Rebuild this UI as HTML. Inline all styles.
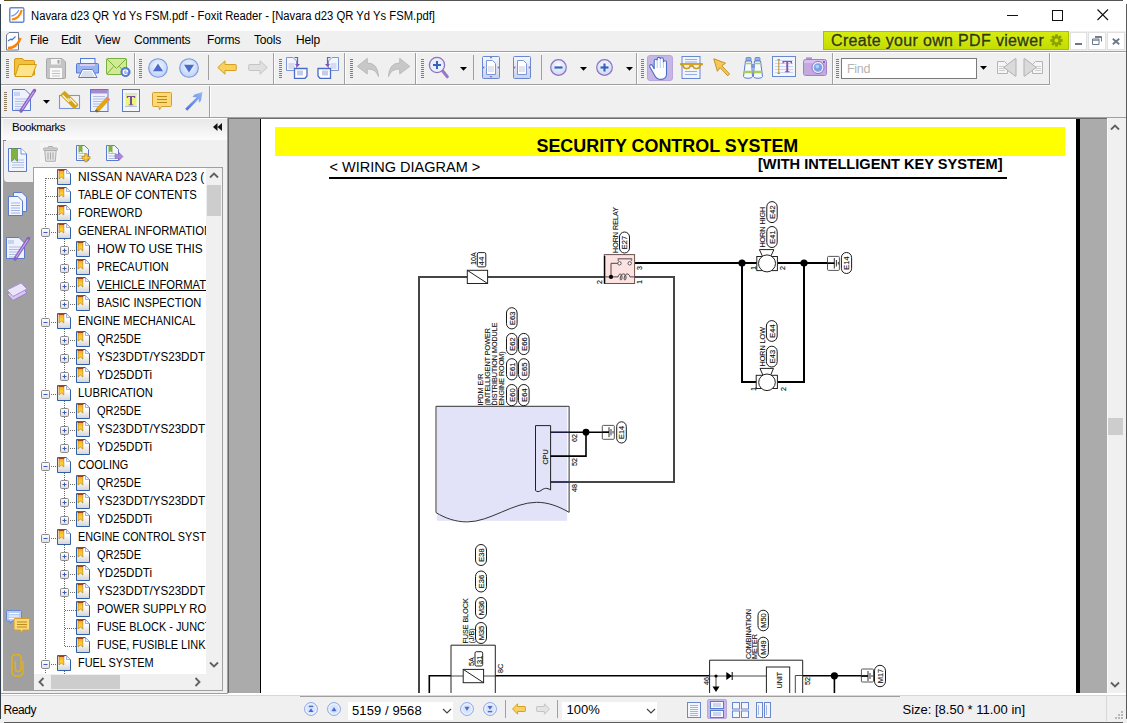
<!DOCTYPE html>
<html><head><meta charset="utf-8">
<style>
*{margin:0;padding:0;box-sizing:border-box}
html,body{width:1127px;height:723px;overflow:hidden;background:#f0f0f0;font-family:"Liberation Sans",sans-serif;color:#000}
.a{position:absolute}
.t{position:absolute;white-space:nowrap;font-size:12px;line-height:14px}
svg{position:absolute;overflow:visible}
.grip{background:repeating-linear-gradient(#8a7c62 0,#8a7c62 1px,transparent 1px,transparent 2px)}
</style></head><body>
<!-- backdrop edges -->
<div class="a" style="left:0;top:0;width:1127px;height:723px;background:#f0f0f0"></div>

<!-- title bar -->
<div class="a" style="left:0;top:0;width:1127px;height:31px;background:#fff"></div>
<div class="a" style="left:4px;top:0;width:1119px;height:1px;background:#555"></div>
<div class="a" style="left:4px;top:0;width:10px;height:1px;background:#5a4c20"></div>
<div class="a" style="left:0;top:4px;width:1px;height:715px;background:#34404c"></div>
<div class="a" style="left:1126px;top:4px;width:1px;height:715px;background:#5a5a5a"></div>
<div class="a" style="left:4px;top:722px;width:1119px;height:1px;background:#5a5a5a"></div>
<div class="t" style="left:31px;top:9px;transform:scaleX(0.938);transform-origin:0 0;color:#000">Navara d23 QR Yd Ys FSM.pdf - Foxit Reader - [Navara d23 QR Yd Ys FSM.pdf]</div>

<!-- menu bar -->
<div class="a" style="left:1px;top:31px;width:1125px;height:20px;background:#f0f0f0"></div>
<div class="a" style="left:1px;top:51px;width:1125px;height:1px;background:#a0a0a0"></div>
<div class="a" style="left:1px;top:52px;width:1125px;height:1px;background:#fff"></div>


<!-- title icon -->
<svg style="left:9px;top:7px" width="16" height="16" viewBox="0 0 17 16" preserveAspectRatio="none">
<rect x="0.8" y="0.8" width="15" height="14.5" rx="1.5" fill="#fff" stroke="#6a88d0" stroke-width="1.6"/>
<path d="M3,12.5 C8,12 12,9 13.5,3" fill="none" stroke="#ff8a00" stroke-width="2.2"/>
<path d="M2.5,9 C4.5,9 8.5,7 10.5,3" fill="none" stroke="#6a9ae0" stroke-width="1.3"/>
</svg>
<!-- window controls -->
<div class="a" style="left:1007px;top:15px;width:11px;height:1px;background:#111"></div>
<div class="a" style="left:1052px;top:10px;width:11px;height:11px;border:1px solid #111"></div>
<svg style="left:1097px;top:9px" width="12" height="12" viewBox="0 0 12 12"><path d="M0.5,0.5 L11,11 M11,0.5 L0.5,11" stroke="#111" stroke-width="1.1"/></svg>

<!-- menu -->
<svg style="left:6px;top:32px" width="16" height="19" viewBox="0 0 16 19">
<path d="M0.5,3 L3,0.5 H12.5 V18 H0.5 Z" fill="#fff" stroke="#707890" stroke-width="1"/>
<path d="M2,16 C7,16 12,13 14.5,6" fill="none" stroke="#ff8000" stroke-width="2.4"/>
<path d="M2,9 L5,7 L6,8 L9.5,4.5" fill="none" stroke="#3a78d8" stroke-width="1.2"/>
</svg>
<div class="t" style="left:30px;top:33px;letter-spacing:-0.2px">File</div>
<div class="t" style="left:61px;top:33px;letter-spacing:-0.2px">Edit</div>
<div class="t" style="left:95px;top:33px;letter-spacing:-0.2px">View</div>
<div class="t" style="left:134px;top:33px;letter-spacing:-0.2px">Comments</div>
<div class="t" style="left:207px;top:33px;letter-spacing:-0.2px">Forms</div>
<div class="t" style="left:254px;top:33px;letter-spacing:-0.2px">Tools</div>
<div class="t" style="left:296px;top:33px;letter-spacing:-0.2px">Help</div>

<!-- banner -->
<div class="a" style="left:823px;top:31px;width:246px;height:19px;background:linear-gradient(#d6ec10,#c4dc00);border:1px solid #a8c000"></div>
<div class="t" style="left:831px;top:31px;font-size:16px;line-height:19px;color:#303a00;letter-spacing:0.33px;-webkit-text-stroke:0.35px #303a00;text-shadow:0 0 2px #eaff70">Create your own PDF viewer</div>
<svg style="left:1049px;top:33px" width="15" height="15" viewBox="0 0 17 17">
<g fill="#8aa000"><circle cx="8.5" cy="8.5" r="5"/>
<rect x="7" y="1.5" width="3" height="14"/><rect x="1.5" y="7" width="14" height="3"/>
<rect x="7" y="1.5" width="3" height="14" transform="rotate(45 8.5 8.5)"/><rect x="7" y="1.5" width="3" height="14" transform="rotate(-45 8.5 8.5)"/></g>
<circle cx="8.5" cy="8.5" r="2.2" fill="#d0e800"/>
</svg>
<!-- MDI controls -->
<div class="a" style="left:1070px;top:32px;width:17px;height:18px;background:#fff;border:1px solid #e0e0e0"></div>
<div class="a" style="left:1075px;top:43px;width:7px;height:2px;background:#6a7888"></div>
<div class="a" style="left:1088px;top:32px;width:18px;height:18px;background:#fff;border:1px solid #e0e0e0"></div>
<svg style="left:1092px;top:36px" width="10" height="9" viewBox="0 0 10 9"><path d="M3,0.5 H9.5 V5.5 M0.5,3 H7 V8.5 H0.5 Z M0.5,4.2 H7 M3,1.6 H9.5" fill="none" stroke="#6a7888" stroke-width="1"/></svg>
<div class="a" style="left:1107px;top:32px;width:18px;height:18px;background:#fff;border:1px solid #e0e0e0"></div>
<svg style="left:1112px;top:38px" width="8" height="7" viewBox="0 0 8 7"><path d="M0.8,0.8 L7.2,6.2 M7.2,0.8 L0.8,6.2" stroke="#6a7888" stroke-width="1.8"/></svg>

<!-- toolbars -->
<div class="a" style="left:1px;top:84px;width:1049px;height:1px;background:#a0a0a0"></div>
<div class="a" style="left:1px;top:85px;width:1049px;height:1px;background:#fff"></div>
<div class="a" style="left:1px;top:117px;width:1125px;height:1px;background:#a0a0a0"></div>

<div class="a grip" style="left:6px;top:59px;width:3px;height:19px"></div>
<svg style="left:14px;top:58px" width="24" height="20" viewBox="0 0 24 20">
<path d="M0.5,2 Q0.5,0.5 2,0.5 H8.5 L10,2.5 H19.5 Q20.5,2.5 20.5,3.5 V17 H0.5 Z" fill="#f2c040" stroke="#d49a10" stroke-width="1"/>
<path d="M5,6.5 H22.5 L18,18.5 H1 Z" fill="#fde48a" stroke="#d49a10" stroke-width="1"/>
</svg>
<svg style="left:46px;top:58px" width="20" height="21" viewBox="0 0 20 21">
<path d="M0.5,1.5 Q0.5,0.5 1.5,0.5 H16 L19.5,4 V19.5 Q19.5,20.5 18.5,20.5 H1.5 Q0.5,20.5 0.5,19.5 Z" fill="#c4c4c4" stroke="#a8a8a8" stroke-width="1"/>
<rect x="5" y="1" width="9.5" height="5.5" fill="#f4f4f4"/><rect x="11.5" y="2" width="2" height="3.5" fill="#a0a0a0"/>
<rect x="4" y="10" width="12" height="10" fill="#fafafa"/>
<path d="M6,13 H14 M6,15.5 H14 M6,18 H14" stroke="#c0c0c0" stroke-width="1"/>
</svg>
<svg style="left:76px;top:58px" width="24" height="20" viewBox="0 0 24 20">
<rect x="4.5" y="0.5" width="14.5" height="7" fill="#f0f8ff" stroke="#5a7ad0" stroke-width="1"/>
<path d="M0.5,6.5 Q0.5,5.5 1.5,5.5 H21.5 Q22.5,5.5 22.5,6.5 V15 H0.5 Z" fill="#98b4f0" stroke="#5a7ad0" stroke-width="1"/>
<rect x="4" y="6" width="15" height="2" fill="#e0c8ec"/>
<path d="M6.5,11.5 H16.5 L21,19.5 H2.5 Z" fill="#fff" stroke="#5a7ad0" stroke-width="1"/>
<path d="M7,14 H16 M6,16 H17 M5,18 H18" stroke="#a8b8e0" stroke-width="0.9"/>
</svg>
<svg style="left:106px;top:58px" width="25" height="20" viewBox="0 0 25 20">
<rect x="0.5" y="0.5" width="20" height="16" rx="1" fill="#d2ea94" stroke="#78b040" stroke-width="1"/>
<path d="M1,1 L10.5,10.5 L20,1 M1,16 L7.5,8.5 M20,16 L13.5,8.5" fill="none" stroke="#78b040" stroke-width="1"/>
<circle cx="19.5" cy="14" r="4.6" fill="#5a82d8" stroke="#4468c0" stroke-width="0.8"/>
<path d="M17.2,14 H21.6 Q21.6,11.8 19.5,11.8 Q17.2,11.8 17.2,14 Q17.2,16.3 19.5,16.3 Q20.8,16.3 21.4,15.6" fill="none" stroke="#fff" stroke-width="1.2"/>
</svg>
<div class="a" style="left:134px;top:53px;width:1px;height:31px;background:#a0a0a0"></div><div class="a" style="left:135px;top:53px;width:1px;height:31px;background:#fff"></div>
<div class="a grip" style="left:139px;top:59px;width:3px;height:19px"></div>
<svg style="left:148px;top:58px" width="20" height="20" viewBox="0 0 20 20">
<defs><radialGradient id="cg148" cx="0.5" cy="0.4" r="0.6"><stop offset="0" stop-color="#f4f8ff"/><stop offset="1" stop-color="#bcd0f6"/></radialGradient></defs>
<circle cx="10" cy="10" r="9.3" fill="url(#cg148)" stroke="#7898e0" stroke-width="1.1"/><path d="M5,13.2 H15 L10,5.5 Z" fill="#4a6cc8"/></svg>
<svg style="left:179px;top:58px" width="20" height="20" viewBox="0 0 20 20">
<defs><radialGradient id="cg179" cx="0.5" cy="0.4" r="0.6"><stop offset="0" stop-color="#f4f8ff"/><stop offset="1" stop-color="#bcd0f6"/></radialGradient></defs>
<circle cx="10" cy="10" r="9.3" fill="url(#cg179)" stroke="#7898e0" stroke-width="1.1"/><path d="M5,6.8 H15 L10,14.5 Z" fill="#4a6cc8"/></svg>
<div class="a" style="left:208px;top:55px;width:1px;height:25px;background:#a0a0a0"></div>
<svg style="left:217px;top:60px" width="20" height="15" viewBox="0 0 20 15">
<path d="M0.8,7.5 L8,0.8 V4.5 H18.5 Q19.3,4.5 19.3,5.3 V9.7 Q19.3,10.5 18.5,10.5 H8 V14.2 Z" fill="#f8d060" stroke="#d8a020" stroke-width="1"/>
</svg>
<svg style="left:248px;top:60px" width="20" height="15" viewBox="0 0 20 15">
<path d="M19.2,7.5 L12,0.8 V4.5 H1.5 Q0.7,4.5 0.7,5.3 V9.7 Q0.7,10.5 1.5,10.5 H12 V14.2 Z" fill="#e0e0e0" stroke="#c4c4c4" stroke-width="1"/>
</svg>
<div class="a" style="left:273px;top:53px;width:1px;height:31px;background:#a0a0a0"></div><div class="a" style="left:274px;top:53px;width:1px;height:31px;background:#fff"></div>
<div class="a grip" style="left:279px;top:59px;width:3px;height:19px"></div>
<svg style="left:286px;top:57px" width="22" height="22" viewBox="0 0 22 22"><g>
<path d="M0.5,0.5 H7 L10.5,4 V13.5 H0.5 Z" fill="#f4f6ff" stroke="#7a96d8" stroke-width="1"/>
<path d="M2.5,7 H8.5 M2.5,9 H8.5 M2.5,11 H8.5" stroke="#a8b4d0" stroke-width="0.8"/>
<path d="M8.5,0.5 H11.5 V8.5" fill="none" stroke="#8a50b8" stroke-width="1.2"/>
<path d="M9,7 H14 L11.5,10 Z" fill="#8a50b8"/>
<path d="M8.5,11.5 H21 V19 L19,21.3 H8.5 Z" fill="#fff" stroke="#4a6cc8" stroke-width="1.3"/>
<path d="M12,13.5 V18.5 M14,13.5 V18.5 M16,13.5 V18.5" stroke="#7a90d0" stroke-width="0.9"/>
</g></svg>
<svg style="left:317px;top:57px" width="22" height="22" viewBox="0 0 22 22"><g transform="translate(22,0) scale(-1,1)">
<path d="M0.5,0.5 H7 L10.5,4 V13.5 H0.5 Z" fill="#f4f6ff" stroke="#7a96d8" stroke-width="1"/>
<path d="M2.5,7 H8.5 M2.5,9 H8.5 M2.5,11 H8.5" stroke="#a8b4d0" stroke-width="0.8"/>
<path d="M8.5,0.5 H11.5 V8.5" fill="none" stroke="#8a50b8" stroke-width="1.2"/>
<path d="M9,7 H14 L11.5,10 Z" fill="#8a50b8"/>
<path d="M8.5,11.5 H21 V19 L19,21.3 H8.5 Z" fill="#fff" stroke="#4a6cc8" stroke-width="1.3"/>
<path d="M12,13.5 V18.5 M14,13.5 V18.5 M16,13.5 V18.5" stroke="#7a90d0" stroke-width="0.9"/>
</g></svg>
<div class="a" style="left:344px;top:53px;width:1px;height:31px;background:#a0a0a0"></div><div class="a" style="left:345px;top:53px;width:1px;height:31px;background:#fff"></div>
<div class="a grip" style="left:350px;top:59px;width:3px;height:19px"></div>
<svg style="left:357px;top:58px" width="22" height="19" viewBox="0 0 22 19">
<path d="M0.3,8.4 L10.3,0.3 V5 Q21,5 21.5,18.6 Q19,10.8 10.3,11 V16 Z" fill="#c8c8c8" stroke="#b4b4b4" stroke-width="0.8"/>
</svg>
<svg style="left:388px;top:58px" width="22" height="19" viewBox="0 0 22 19">
<path d="M21.7,8.4 L11.7,0.3 V5 Q1,5 0.5,18.6 Q3,10.8 11.7,11 V16 Z" fill="#c8c8c8" stroke="#b4b4b4" stroke-width="0.8"/>
</svg>
<div class="a" style="left:415px;top:53px;width:1px;height:31px;background:#a0a0a0"></div><div class="a" style="left:416px;top:53px;width:1px;height:31px;background:#fff"></div>
<div class="a grip" style="left:421px;top:59px;width:3px;height:19px"></div>
<svg style="left:428px;top:56px" width="21" height="23" viewBox="0 0 21 23">
<path d="M13.5,13.5 L19.3,20.8" stroke="#9a78c8" stroke-width="3" stroke-linecap="round"/>
<circle cx="9" cy="9" r="7.6" fill="#e8eefc" stroke="#9070c0" stroke-width="1.3"/>
<path d="M5,9 H13 M9,5 V13" stroke="#3a62b8" stroke-width="2"/>
</svg>
<svg style="left:460px;top:67px" width="7" height="4" viewBox="0 0 7 4"><path d="M0,0 H7 L3.5,3.8 Z" fill="#000"/></svg>
<div class="a" style="left:473px;top:55px;width:1px;height:25px;background:#a0a0a0"></div>
<svg style="left:482px;top:56px" width="18" height="23" viewBox="0 0 18 23">
<defs><linearGradient id="fg482" x1="0" y1="0" x2="0" y2="1"><stop offset="0" stop-color="#f6f8fe"/><stop offset="1" stop-color="#c8d2ec"/></linearGradient></defs>
<rect x="0.5" y="0.5" width="17" height="22" rx="1" fill="url(#fg482)" stroke="#6a88d0" stroke-width="1"/>
<path d="M4.5,4.5 H10.5 L13.5,7.5 V18.5 H4.5 Z" fill="#fff" stroke="#7a96d8" stroke-width="1"/>
<path d="M6,11 H12 M6,13 H12 M6,15 H12" stroke="#b0bcd8" stroke-width="0.8"/>
<path d="M2.2,10 V13 L0.8,11.5 Z M15.8,10 V13 L17.2,11.5 Z" fill="#8a50b8"/><path d="M7.5,2.2 H10.5 L9,0.8 Z M7.5,20.3 H10.5 L9,21.7 Z" fill="#8a50b8"/>
</svg>
<svg style="left:513px;top:56px" width="18" height="23" viewBox="0 0 18 23">
<defs><linearGradient id="fg513" x1="0" y1="0" x2="0" y2="1"><stop offset="0" stop-color="#f6f8fe"/><stop offset="1" stop-color="#c8d2ec"/></linearGradient></defs>
<rect x="0.5" y="0.5" width="17" height="22" rx="1" fill="url(#fg513)" stroke="#6a88d0" stroke-width="1"/>
<path d="M4.5,4.5 H10.5 L13.5,7.5 V18.5 H4.5 Z" fill="#fff" stroke="#7a96d8" stroke-width="1"/>
<path d="M6,11 H12 M6,13 H12 M6,15 H12" stroke="#b0bcd8" stroke-width="0.8"/>
<path d="M2.2,10 V13 L0.8,11.5 Z M15.8,10 V13 L17.2,11.5 Z" fill="#8a50b8"/>
</svg>
<div class="a" style="left:541px;top:55px;width:1px;height:25px;background:#a0a0a0"></div>
<svg style="left:550px;top:59px" width="17" height="17" viewBox="0 0 17 17">
<defs><radialGradient id="zg550" cx="0.5" cy="0.35" r="0.65"><stop offset="0" stop-color="#fafcff"/><stop offset="1" stop-color="#c8d8f8"/></radialGradient></defs>
<circle cx="8.5" cy="8.5" r="7.8" fill="url(#zg550)" stroke="#9070c0" stroke-width="1.2"/><path d="M4.5,8.5 H12.5" stroke="#3a62b8" stroke-width="2.2"/></svg>
<svg style="left:580px;top:67px" width="7" height="4" viewBox="0 0 7 4"><path d="M0,0 H7 L3.5,3.8 Z" fill="#000"/></svg>
<svg style="left:596px;top:59px" width="17" height="17" viewBox="0 0 17 17">
<defs><radialGradient id="zg596" cx="0.5" cy="0.35" r="0.65"><stop offset="0" stop-color="#fafcff"/><stop offset="1" stop-color="#c8d8f8"/></radialGradient></defs>
<circle cx="8.5" cy="8.5" r="7.8" fill="url(#zg596)" stroke="#9070c0" stroke-width="1.2"/><path d="M4.5,8.5 H12.5" stroke="#3a62b8" stroke-width="2.2"/><path d="M8.5,4.5 V12.5" stroke="#3a62b8" stroke-width="2.2"/></svg>
<svg style="left:626px;top:67px" width="7" height="4" viewBox="0 0 7 4"><path d="M0,0 H7 L3.5,3.8 Z" fill="#000"/></svg>
<div class="a" style="left:636px;top:53px;width:1px;height:31px;background:#a0a0a0"></div><div class="a" style="left:637px;top:53px;width:1px;height:31px;background:#fff"></div>
<div class="a grip" style="left:641px;top:59px;width:3px;height:19px"></div>
<div class="a" style="left:647px;top:55px;width:26px;height:26px;background:#c6b6e6;border:1px solid #b8a6dc;border-radius:3px"></div>
<svg style="left:649px;top:57px" width="22" height="23" viewBox="0 0 22 23"><g transform="translate(22,0) scale(-1,1)">
<path d="M4.5,13 V5.5 Q4.5,3.8 6.1,3.8 Q7.6,3.8 7.6,5.5 V2.2 Q7.6,0.7 9.1,0.7 Q10.7,0.7 10.7,2.2 V1.8 Q10.7,0.4 12.2,0.4 Q13.8,0.4 13.8,1.8 V3.6 Q13.8,2.3 15.3,2.3 Q16.8,2.3 16.8,3.8 V12 L18.6,8.6 Q19.5,7.2 20.8,7.9 Q21.7,8.6 21.1,9.9 L16,19 Q14.3,22.4 10,22.4 Q5,22.4 4.5,17.8 Z" fill="#fff" stroke="#4a6cc8" stroke-width="1.1"/>
<path d="M7.6,5 V11 M10.7,2.5 V11 M13.8,3 V11" stroke="#b0c4ec" stroke-width="0.9"/>
</g></svg>
<svg style="left:680px;top:56px" width="23" height="23" viewBox="0 0 23 23">
<rect x="2" y="0.5" width="18" height="22" fill="#f0f4ff" stroke="#6a88d0" stroke-width="1"/>
<path d="M5,3.5 H17 M5,6 H17 M5,15.5 H17 M5,18.5 H17" stroke="#98aee0" stroke-width="1"/>
<path d="M0.5,7.5 H22.5 V9 H20.5 Q20.5,13 16.5,13 Q13,13 12.5,10.5 H10.5 Q10,13 6.5,13 Q2.5,13 2.5,9 H0.5 Z" fill="#d8a420" stroke="#b88410" stroke-width="0.6"/>
<path d="M4,9 Q4,11.7 6.6,11.7 Q9.3,11.7 9.3,9 Z M13.7,9 Q13.7,11.7 16.4,11.7 Q19,11.7 19,9 Z" fill="#f6f2e0"/>
</svg>
<svg style="left:713px;top:58px" width="18" height="19" viewBox="0 0 18 19">
<path d="M0.8,0.8 L12.5,5.2 L8.8,7.8 L16.6,16 L14.8,17.8 L7,9.6 L4.4,13.3 Z" fill="#f4c85a" stroke="#c89020" stroke-width="1"/>
</svg>
<svg style="left:742px;top:57px" width="23" height="22" viewBox="0 0 23 22">
<rect x="4" y="0.5" width="5" height="3.5" rx="1" fill="#98b0e8" stroke="#5a7ad0" stroke-width="0.8"/>
<rect x="13" y="0.5" width="5" height="3.5" rx="1" fill="#98b0e8" stroke="#5a7ad0" stroke-width="0.8"/>
<path d="M3.5,4 H9.5 L10.5,19.5 Q10.5,21.3 6.2,21.3 Q1.5,21.3 1.5,19.5 Z" fill="#f6f8ff" stroke="#5a7ad0" stroke-width="1"/>
<path d="M12.5,4 H18.5 L20.5,19.5 Q20.5,21.3 16,21.3 Q11.5,21.3 11.5,19.5 Z" fill="#f6f8ff" stroke="#5a7ad0" stroke-width="1"/>
<path d="M3.3,6.5 H9.6 M12.4,6.5 H18.8" stroke="#a8d050" stroke-width="1.5"/>
<path d="M2,15 H10.3 M12,15 H20.1" stroke="#a8d050" stroke-width="2.5"/>
<rect x="9.5" y="7" width="3" height="4" fill="#7a96d8"/>
</svg>
<svg style="left:772px;top:56px" width="24" height="21" viewBox="0 0 24 21">
<rect x="0.5" y="0.5" width="23" height="20" fill="#f4f6ff" stroke="#6a88d0" stroke-width="1"/>
<path d="M3,4.5 H21 M3,7.5 H21 M3,10.5 H21 M3,13.5 H21 M3,16.5 H21" stroke="#c4d0ec" stroke-width="0.9"/>
<path d="M6.8,3.5 V17.5 M5.5,3.5 H8 M5.5,17.5 H8" stroke="#c09020" stroke-width="1"/>
<path d="M10.5,5 H20 V7.5 H19.2 Q19,6 17.5,6 H16.2 V15.2 H17.5 V16.3 H13 V15.2 H14.3 V6 H13 Q11.5,6 11.3,7.5 H10.5 Z" fill="#8a50b0"/>
</svg>
<svg style="left:803px;top:57px" width="24" height="19" viewBox="0 0 24 19">
<rect x="3" y="0.3" width="6" height="2.5" fill="#b890d8"/>
<rect x="0.5" y="2.5" width="23" height="16" rx="2" fill="#d8c0ec" stroke="#a080c8" stroke-width="1"/>
<rect x="1" y="6" width="22" height="12" fill="#c4a8e0"/>
<circle cx="15" cy="10.5" r="6" fill="#f0f4ff" stroke="#9070c0" stroke-width="1"/>
<circle cx="15" cy="10.5" r="4.3" fill="#7aa0e8"/>
<circle cx="14.3" cy="9.6" r="1.8" fill="#b8d0f8"/>
<circle cx="21" cy="5" r="1" fill="#6a4a98"/>
</svg>
<div class="a" style="left:832px;top:53px;width:1px;height:31px;background:#a0a0a0"></div><div class="a" style="left:833px;top:53px;width:1px;height:31px;background:#fff"></div>
<div class="a grip" style="left:836px;top:59px;width:3px;height:19px"></div>
<div class="a" style="left:841px;top:58px;width:136px;height:21px;background:#fff;border:1px solid #7a7a7a"></div>
<div class="t" style="left:847px;top:62px;color:#b4b4b4;font-size:12.5px;letter-spacing:-0.3px">Find</div>
<svg style="left:980px;top:66px" width="7" height="4" viewBox="0 0 7 4"><path d="M0,0 H7 L3.5,3.8 Z" fill="#000"/></svg>
<svg style="left:997px;top:58px" width="20" height="19" viewBox="0 0 20 19">
<path d="M0.5,3.5 H7.5 L10.5,6.5 V15.5 H0.5 Z" fill="#f6f6f6" stroke="#b4b4b4" stroke-width="1"/>
<path d="M2,8.5 H8 M2,10.5 H8 M2,12.5 H8" stroke="#c4c4c4" stroke-width="0.8"/>
<path d="M19,0.8 V18 Q19,18.5 18.4,18.2 L7.2,9.8 Q6.6,9.4 7.2,9 L18.4,0.6 Q19,0.3 19,0.8 Z" fill="#dadada" stroke="#b0b0b0" stroke-width="1"/>
</svg>
<svg style="left:1023px;top:58px" width="20" height="19" viewBox="0 0 20 19"><g transform="translate(20,0) scale(-1,1)">
<path d="M0.5,3.5 H7.5 L10.5,6.5 V15.5 H0.5 Z" fill="#f6f6f6" stroke="#b4b4b4" stroke-width="1"/>
<path d="M2,8.5 H8 M2,10.5 H8 M2,12.5 H8" stroke="#c4c4c4" stroke-width="0.8"/>
<path d="M19,0.8 V18 Q19,18.5 18.4,18.2 L7.2,9.8 Q6.6,9.4 7.2,9 L18.4,0.6 Q19,0.3 19,0.8 Z" fill="#dadada" stroke="#b0b0b0" stroke-width="1"/>
</g></svg>
<div class="a" style="left:1049px;top:53px;width:1px;height:31px;background:#a0a0a0"></div><div class="a" style="left:1050px;top:53px;width:1px;height:31px;background:#fff"></div>
<div class="a grip" style="left:4px;top:92px;width:3px;height:19px"></div>
<svg style="left:12px;top:89px" width="24" height="23" viewBox="0 0 24 23">
<path d="M0.5,0.5 H13 L18.5,6 V21.5 H0.5 Z" fill="#eef2fe" stroke="#5a7ad0" stroke-width="1"/>
<path d="M3,3 V7 M5,3 V7 M7,3 V7" stroke="#b0c0e8" stroke-width="1.2"/>
<path d="M3,10 H15 M3,12.5 H15 M3,15 H13 M3,17.5 H11 M3,20 H9" stroke="#a8b8e0" stroke-width="0.9"/>
<path d="M22.5,1.5 L9,22" stroke="#8a60c0" stroke-width="3.4" stroke-linecap="round"/>
<path d="M22,2.5 L10,20.5" stroke="#c8a8f0" stroke-width="1.2"/>
</svg>
<svg style="left:43px;top:100px" width="7" height="4" viewBox="0 0 7 4"><path d="M0,0 H7 L3.5,3.8 Z" fill="#000"/></svg>
<svg style="left:58px;top:89px" width="23" height="22" viewBox="0 0 23 22">
<rect x="1.5" y="6.5" width="20" height="13" fill="#f2f2f2" stroke="#7a96d8" stroke-width="1.1"/>
<g transform="rotate(-45 11.5 11)">
<rect x="8.3" y="1" width="6.4" height="20" rx="1.2" fill="#d4a418"/>
<path d="M10,2.8 V12 M13,10 V19.2" stroke="#fff" stroke-width="1.1"/>
<rect x="10.9" y="8.5" width="1.2" height="4" fill="#f6e8b8"/>
</g>
</svg>
<svg style="left:90px;top:89px" width="20" height="24" viewBox="0 0 20 24">
<rect x="0.5" y="0.5" width="17.5" height="22" fill="#eef2fe" stroke="#5a7ad0" stroke-width="1"/>
<rect x="1" y="1" width="16.5" height="3.5" fill="#a888d0"/>
<path d="M3,7.5 H15 M3,10 H15 M3,12.5 H15 M3,15 H12 M3,17.5 H10" stroke="#a8b8e0" stroke-width="0.9"/>
<path d="M18.5,9 L7.5,21" stroke="#e0a810" stroke-width="4.2"/>
<path d="M18.5,9 L17,10.6" stroke="#f08080" stroke-width="4.2"/>
<path d="M7.5,21 L6,22.6" stroke="#806040" stroke-width="3"/>
</svg>
<svg style="left:122px;top:89px" width="18" height="23" viewBox="0 0 18 23">
<rect x="0.5" y="0.5" width="17" height="22" fill="#f4f6fe" stroke="#5a7ad0" stroke-width="1"/>
<path d="M3,5 H15 M3,17.5 H15" stroke="#b0c0e8" stroke-width="0.9"/>
<rect x="3.5" y="5.5" width="11" height="11.5" fill="#e8f870"/>
<path d="M4.8,7 H13.2 V9 H12.4 Q12.2,8 11.2,8 H10 V15.5 H11.3 V16.3 H6.7 V15.5 H8 V8 H6.8 Q5.8,8 5.6,9 H4.8 Z" fill="#7a4aa0"/>
</svg>
<svg style="left:152px;top:92px" width="21" height="19" viewBox="0 0 21 19">
<path d="M1.5,0.5 H18.5 Q19.5,0.5 19.5,1.5 V13.5 Q19.5,14.5 18.5,14.5 H9.5 L7.5,17.8 L6.8,14.5 H1.5 Q0.5,14.5 0.5,13.5 V1.5 Q0.5,0.5 1.5,0.5 Z" fill="#fcd878" stroke="#d0a030" stroke-width="1"/>
<path d="M5,4.5 H15 M5,7.5 H15 M5,10.5 H15" stroke="#b88a18" stroke-width="1.2"/>
</svg>
<svg style="left:184px;top:91px" width="20" height="21" viewBox="0 0 20 21">
<defs><linearGradient id="arg" x1="0" y1="1" x2="1" y2="0"><stop offset="0" stop-color="#4a72d8"/><stop offset="1" stop-color="#98b8f8"/></linearGradient></defs>
<path d="M1.2,17.8 L12.8,6.2 L8.5,6 L10.5,3.5 L18.5,1 L17,9.8 L14.8,11.8 L15,7.8 L3.2,19.8 Z" fill="url(#arg)"/>
</svg>
<div class="a" style="left:209px;top:86px;width:1px;height:31px;background:#a0a0a0"></div><div class="a" style="left:210px;top:86px;width:1px;height:31px;background:#fff"></div>
<!-- left panel -->
<div class="a" style="left:1px;top:118px;width:227px;height:575px;background:#f0f0f0"></div>

<div class="a" style="left:1px;top:118px;width:226px;height:22px;background:linear-gradient(#fff 0,#fff 1px,#e8e8e8 1px,#fbfbfb 21px)"></div>
<div class="t" style="left:12px;top:120px;font-size:11.5px;letter-spacing:-0.5px">Bookmarks</div>
<svg style="left:213px;top:123px" width="10" height="8" viewBox="0 0 10 8"><path d="M0,4 L4.5,0 V8 Z M4.5,4 L9,0 V8 Z" fill="#111"/></svg>
<div class="a" style="left:227px;top:118px;width:1px;height:576px;background:#a0a0a0"></div>
<div class="a" style="left:1px;top:693px;width:227px;height:1px;background:#a0a0a0"></div>
<div class="a" style="left:3px;top:140px;width:31px;height:551px;background:#a0a0a0"></div>
<div class="a" style="left:3px;top:140px;width:31px;height:42px;background:#f0f0f0;border-left:1px solid #a0a0a0;border-bottom-left-radius:4px"></div><div class="a" style="left:3px;top:140px;width:3px;height:1px;background:#808080"></div>
<div class="a" style="left:2px;top:118px;width:1px;height:575px;background:#fafafa"></div>
<svg style="left:8px;top:148px" width="20" height="25" viewBox="0 0 20 25">
<path d="M0.5,0.5 H13 L18.5,6 V23.5 H0.5 Z" fill="#f0f4fe" stroke="#5a7ad0" stroke-width="1"/>
<path d="M13,0.5 V6 H18.5" fill="#fff" stroke="#5a7ad0" stroke-width="0.8"/>
<path d="M4,12 H16 M4,14.5 H16 M4,17 H16 M4,19.5 H16" stroke="#a8b8e0" stroke-width="0.9"/>
<path d="M3.5,0.5 H9.5 V13.5 L6.5,10.5 L3.5,13.5 Z" fill="#80b040" stroke="#5a8a28" stroke-width="0.6"/>
</svg>
<svg style="left:8px;top:192px" width="20" height="25" viewBox="0 0 20 25">
<path d="M5.5,0.5 H14 L18.5,5 V19.5 H5.5 Z" fill="#eef2fe" stroke="#5a7ad0" stroke-width="1"/>
<path d="M0.5,4.5 H10 L14.5,9 V23.5 H0.5 Z" fill="#f4f6fe" stroke="#5a7ad0" stroke-width="1"/>
<path d="M3,11 H12 M3,13.5 H12 M3,16 H12 M3,18.5 H12 M3,21 H12" stroke="#98aee0" stroke-width="0.9"/>
</svg>
<svg style="left:6px;top:237px" width="24" height="23" viewBox="0 0 24 23">
<path d="M0.5,0.5 H13 L18.5,6 V21.5 H0.5 Z" fill="#eef2fe" stroke="#5a7ad0" stroke-width="1"/>
<path d="M3,3 V7 M5,3 V7 M7,3 V7" stroke="#b0c0e8" stroke-width="1.2"/>
<path d="M3,10 H15 M3,12.5 H15 M3,15 H13 M3,17.5 H11 M3,20 H9" stroke="#a8b8e0" stroke-width="0.9"/>
<path d="M22.5,1.5 L9,22" stroke="#8a60c0" stroke-width="3.4" stroke-linecap="round"/>
<path d="M22,2.5 L10,20.5" stroke="#c8a8f0" stroke-width="1.2"/>
</svg>
<svg style="left:6px;top:281px" width="22" height="22" viewBox="0 0 22 22">
<path d="M1,13 L15,6 L21,12 L7,19.5 Z" fill="#d8c8f0" stroke="#9a80c8" stroke-width="1"/>
<path d="M1,9 L15,2 L21,8 L7,15.5 Z" fill="#ece4fa" stroke="#a890d0" stroke-width="1"/>
</svg>
<svg style="left:6px;top:610px" width="24" height="24" viewBox="0 0 24 24">
<path d="M1,0.5 H14.5 Q15.5,0.5 15.5,1.5 V10 Q15.5,11 14.5,11 H6 L4.5,13.5 L4,11 H1 Q0.5,11 0.5,10 V1.5 Q0.5,0.5 1,0.5 Z" fill="#b8ccf4" stroke="#6a88d0" stroke-width="1"/>
<path d="M3,3.5 H13 M3,6 H13 M3,8.5 H10" stroke="#fff" stroke-width="1"/>
<path d="M9,8.5 H22.5 Q23.5,8.5 23.5,9.5 V19 Q23.5,20 22.5,20 H17 L15.5,23 L14.5,20 H9 Q8,20 8,19 V9.5 Q8,8.5 9,8.5 Z" fill="#fcd878" stroke="#d0a030" stroke-width="1"/>
<path d="M11,12 H21 M11,14.5 H21 M11,17 H21" stroke="#b88a18" stroke-width="1"/>
</svg>
<svg style="left:11px;top:653px" width="14" height="25" viewBox="0 0 14 25">
<path d="M12,8 V19 Q12,23.3 6.5,23.3 Q1,23.3 1,19 V5 Q1,1.5 5.5,1.5 Q10,1.5 10,5 V16 Q10,18.5 6.8,18.5 Q4.3,18.5 4.3,16 V8" fill="none" stroke="#e0b020" stroke-width="1.5"/>
</svg>
<div class="a" style="left:40px;top:143px;width:20px;height:20px;background:#f4f4f4"></div>
<svg style="left:43px;top:146px" width="15" height="16" viewBox="0 0 15 16">
<path d="M5,1.5 Q5,0.5 6,0.5 H9 Q10,0.5 10,1.5" fill="none" stroke="#a8a8a8" stroke-width="1"/>
<rect x="0.5" y="2" width="14" height="2.5" rx="1" fill="#d0d0d0" stroke="#a8a8a8" stroke-width="0.9"/>
<path d="M1.8,4.5 H13.2 L12.3,15.3 H2.7 Z" fill="#e4e4e4" stroke="#a8a8a8" stroke-width="0.9"/>
<path d="M5,6.5 V13.5 M7.5,6.5 V13.5 M10,6.5 V13.5" stroke="#a8a8a8" stroke-width="1"/>
</svg>
<svg style="left:76px;top:145px" width="18" height="17" viewBox="0 0 18 17">
<path d="M0.5,0.5 H8.5 L12.5,4.5 V15.5 H0.5 Z" fill="#f4f6fe" stroke="#5a7ad0" stroke-width="1"/>
<path d="M2.5,8.5 H10.5 M2.5,11 H10.5 M2.5,13.5 H10.5" stroke="#a8b8e0" stroke-width="0.9"/>
<path d="M2.5,0.5 H6.5 V8 L4.5,6.3 L2.5,8 Z" fill="#80b040"/><path d="M8.8,8.8 H11.2 V11.6 H14 V14 H11.2 V16.8 H8.8 V14 H6 V11.6 H8.8 Z" fill="#f8d040" stroke="#c08a10" stroke-width="0.8"/></svg>
<svg style="left:106px;top:145px" width="18" height="17" viewBox="0 0 18 17">
<path d="M0.5,0.5 H8.5 L12.5,4.5 V15.5 H0.5 Z" fill="#f4f6fe" stroke="#5a7ad0" stroke-width="1"/>
<path d="M2.5,8.5 H10.5 M2.5,11 H10.5 M2.5,13.5 H10.5" stroke="#a8b8e0" stroke-width="0.9"/>
<path d="M2.5,0.5 H6.5 V8 L4.5,6.3 L2.5,8 Z" fill="#80b040"/><path d="M9,9.5 H13 V7.5 L17,11.5 L13,15.5 V13.5 H9 Z" fill="#a888d8" stroke="#8a68c0" stroke-width="0.6"/></svg>
<div class="a" style="left:33px;top:167px;width:190px;height:524px;background:#fff;border-left:1px solid #a0a0a0;border-top:1px solid #a0a0a0;border-right:1px solid #a0a0a0;border-bottom:1px solid #a0a0a0"></div>
<div class="a" style="left:206px;top:168px;width:16px;height:506px;background:#f0f0f0"></div>
<div class="a" style="left:207px;top:185px;width:14px;height:31px;background:#cdcdcd"></div>
<svg style="left:209px;top:172px" width="10" height="7" viewBox="0 0 10 7"><path d="M1,5.5 L5,1.5 L9,5.5" fill="none" stroke="#606060" stroke-width="1.8"/></svg>
<svg style="left:209px;top:661px" width="10" height="7" viewBox="0 0 10 7"><path d="M1,1.5 L5,5.5 L9,1.5" fill="none" stroke="#606060" stroke-width="1.8"/></svg>
<div class="a" style="left:34px;top:674px;width:188px;height:16px;background:#f0f0f0"></div>
<div class="a" style="left:51px;top:675px;width:69px;height:14px;background:#cdcdcd"></div>
<svg style="left:38px;top:677px" width="7" height="10" viewBox="0 0 7 10"><path d="M5.5,1 L1.5,5 L5.5,9" fill="none" stroke="#606060" stroke-width="1.8"/></svg>
<svg style="left:194px;top:677px" width="7" height="10" viewBox="0 0 7 10"><path d="M1.5,1 L5.5,5 L1.5,9" fill="none" stroke="#606060" stroke-width="1.8"/></svg>
<div class="a" style="left:34px;top:168px;width:172px;height:506px;overflow:hidden">
<svg style="left:-34px;top:-168px" width="240" height="700" viewBox="0 0 240 700">
<defs><linearGradient id="pg" x1="0" y1="0" x2="0" y2="1"><stop offset="0.35" stop-color="#fff"/><stop offset="1" stop-color="#d4d4d4"/></linearGradient><linearGradient id="rg" x1="0" y1="0" x2="0" y2="1"><stop offset="0" stop-color="#f0a020"/><stop offset="0.6" stop-color="#ffd030"/></linearGradient><linearGradient id="bg" x1="0" y1="0" x2="0" y2="1"><stop offset="0" stop-color="#fff"/><stop offset="1" stop-color="#e0e0e0"/></linearGradient><g id="bk"><path d="M0.5,0.5 H9.5 L13.5,4.5 V15.5 H0.5 Z" fill="url(#pg)" stroke="#2f5fa8" stroke-width="1"/><path d="M9.5,0.5 V4.5 H13.5" fill="#f0f4ff" stroke="#7a9ad0" stroke-width="0.7"/><path d="M2,0.8 H6.8 V10 L4.4,8 L2,10 Z" fill="url(#rg)" stroke="#b07010" stroke-width="0.6"/><rect x="1.5" y="0.6" width="5.8" height="1.2" fill="#8a3010"/></g><g id="mn"><rect x="0.5" y="0.5" width="8" height="8" rx="1.2" fill="url(#bg)" stroke="#8a8a8a" stroke-width="1"/><path d="M2.5,4.5 H6.5" stroke="#3a5ab8" stroke-width="1"/></g><g id="pl"><rect x="0.5" y="0.5" width="8" height="8" rx="1.2" fill="url(#bg)" stroke="#8a8a8a" stroke-width="1"/><path d="M2.5,4.5 H6.5 M4.5,2.5 V6.5" stroke="#3a5ab8" stroke-width="1"/></g></defs>
<line x1="45.5" y1="178" x2="45.5" y2="700" stroke="#6a6a6a" stroke-width="1" stroke-dasharray="1 1"/>
<line x1="64.5" y1="239" x2="64.5" y2="304" stroke="#6a6a6a" stroke-width="1" stroke-dasharray="1 1"/>
<line x1="64.5" y1="329" x2="64.5" y2="376" stroke="#6a6a6a" stroke-width="1" stroke-dasharray="1 1"/>
<line x1="64.5" y1="401" x2="64.5" y2="448" stroke="#6a6a6a" stroke-width="1" stroke-dasharray="1 1"/>
<line x1="64.5" y1="473" x2="64.5" y2="520" stroke="#6a6a6a" stroke-width="1" stroke-dasharray="1 1"/>
<line x1="64.5" y1="545" x2="64.5" y2="646" stroke="#6a6a6a" stroke-width="1" stroke-dasharray="1 1"/>
<line x1="64.5" y1="671" x2="64.5" y2="700" stroke="#6a6a6a" stroke-width="1" stroke-dasharray="1 1"/>
<line x1="46" y1="178.5" x2="57" y2="178.5" stroke="#6a6a6a" stroke-width="1" stroke-dasharray="1 1"/>
<use href="#bk" x="57" y="169"/>
<line x1="46" y1="196.5" x2="57" y2="196.5" stroke="#6a6a6a" stroke-width="1" stroke-dasharray="1 1"/>
<use href="#bk" x="57" y="187"/>
<line x1="46" y1="214.5" x2="57" y2="214.5" stroke="#6a6a6a" stroke-width="1" stroke-dasharray="1 1"/>
<use href="#bk" x="57" y="205"/>
<line x1="51" y1="232.5" x2="57" y2="232.5" stroke="#6a6a6a" stroke-width="1" stroke-dasharray="1 1"/>
<use href="#mn" x="41" y="228"/>
<use href="#bk" x="57" y="223"/>
<line x1="70" y1="250.5" x2="76" y2="250.5" stroke="#6a6a6a" stroke-width="1" stroke-dasharray="1 1"/>
<use href="#pl" x="60" y="246"/>
<use href="#bk" x="76" y="241"/>
<line x1="70" y1="268.5" x2="76" y2="268.5" stroke="#6a6a6a" stroke-width="1" stroke-dasharray="1 1"/>
<use href="#pl" x="60" y="264"/>
<use href="#bk" x="76" y="259"/>
<line x1="70" y1="286.5" x2="76" y2="286.5" stroke="#6a6a6a" stroke-width="1" stroke-dasharray="1 1"/>
<use href="#pl" x="60" y="282"/>
<use href="#bk" x="76" y="277"/>
<line x1="70" y1="304.5" x2="76" y2="304.5" stroke="#6a6a6a" stroke-width="1" stroke-dasharray="1 1"/>
<use href="#pl" x="60" y="300"/>
<use href="#bk" x="76" y="295"/>
<line x1="51" y1="322.5" x2="57" y2="322.5" stroke="#6a6a6a" stroke-width="1" stroke-dasharray="1 1"/>
<use href="#mn" x="41" y="318"/>
<use href="#bk" x="57" y="313"/>
<line x1="70" y1="340.5" x2="76" y2="340.5" stroke="#6a6a6a" stroke-width="1" stroke-dasharray="1 1"/>
<use href="#pl" x="60" y="336"/>
<use href="#bk" x="76" y="331"/>
<line x1="70" y1="358.5" x2="76" y2="358.5" stroke="#6a6a6a" stroke-width="1" stroke-dasharray="1 1"/>
<use href="#pl" x="60" y="354"/>
<use href="#bk" x="76" y="349"/>
<line x1="70" y1="376.5" x2="76" y2="376.5" stroke="#6a6a6a" stroke-width="1" stroke-dasharray="1 1"/>
<use href="#pl" x="60" y="372"/>
<use href="#bk" x="76" y="367"/>
<line x1="51" y1="394.5" x2="57" y2="394.5" stroke="#6a6a6a" stroke-width="1" stroke-dasharray="1 1"/>
<use href="#mn" x="41" y="390"/>
<use href="#bk" x="57" y="385"/>
<line x1="70" y1="412.5" x2="76" y2="412.5" stroke="#6a6a6a" stroke-width="1" stroke-dasharray="1 1"/>
<use href="#pl" x="60" y="408"/>
<use href="#bk" x="76" y="403"/>
<line x1="70" y1="430.5" x2="76" y2="430.5" stroke="#6a6a6a" stroke-width="1" stroke-dasharray="1 1"/>
<use href="#pl" x="60" y="426"/>
<use href="#bk" x="76" y="421"/>
<line x1="70" y1="448.5" x2="76" y2="448.5" stroke="#6a6a6a" stroke-width="1" stroke-dasharray="1 1"/>
<use href="#pl" x="60" y="444"/>
<use href="#bk" x="76" y="439"/>
<line x1="51" y1="466.5" x2="57" y2="466.5" stroke="#6a6a6a" stroke-width="1" stroke-dasharray="1 1"/>
<use href="#mn" x="41" y="462"/>
<use href="#bk" x="57" y="457"/>
<line x1="70" y1="484.5" x2="76" y2="484.5" stroke="#6a6a6a" stroke-width="1" stroke-dasharray="1 1"/>
<use href="#pl" x="60" y="480"/>
<use href="#bk" x="76" y="475"/>
<line x1="70" y1="502.5" x2="76" y2="502.5" stroke="#6a6a6a" stroke-width="1" stroke-dasharray="1 1"/>
<use href="#pl" x="60" y="498"/>
<use href="#bk" x="76" y="493"/>
<line x1="70" y1="520.5" x2="76" y2="520.5" stroke="#6a6a6a" stroke-width="1" stroke-dasharray="1 1"/>
<use href="#pl" x="60" y="516"/>
<use href="#bk" x="76" y="511"/>
<line x1="51" y1="538.5" x2="57" y2="538.5" stroke="#6a6a6a" stroke-width="1" stroke-dasharray="1 1"/>
<use href="#mn" x="41" y="534"/>
<use href="#bk" x="57" y="529"/>
<line x1="70" y1="556.5" x2="76" y2="556.5" stroke="#6a6a6a" stroke-width="1" stroke-dasharray="1 1"/>
<use href="#pl" x="60" y="552"/>
<use href="#bk" x="76" y="547"/>
<line x1="70" y1="574.5" x2="76" y2="574.5" stroke="#6a6a6a" stroke-width="1" stroke-dasharray="1 1"/>
<use href="#pl" x="60" y="570"/>
<use href="#bk" x="76" y="565"/>
<line x1="70" y1="592.5" x2="76" y2="592.5" stroke="#6a6a6a" stroke-width="1" stroke-dasharray="1 1"/>
<use href="#pl" x="60" y="588"/>
<use href="#bk" x="76" y="583"/>
<line x1="65" y1="610.5" x2="76" y2="610.5" stroke="#6a6a6a" stroke-width="1" stroke-dasharray="1 1"/>
<use href="#bk" x="76" y="601"/>
<line x1="65" y1="628.5" x2="76" y2="628.5" stroke="#6a6a6a" stroke-width="1" stroke-dasharray="1 1"/>
<use href="#bk" x="76" y="619"/>
<line x1="65" y1="646.5" x2="76" y2="646.5" stroke="#6a6a6a" stroke-width="1" stroke-dasharray="1 1"/>
<use href="#bk" x="76" y="637"/>
<line x1="51" y1="664.5" x2="57" y2="664.5" stroke="#6a6a6a" stroke-width="1" stroke-dasharray="1 1"/>
<use href="#mn" x="41" y="660"/>
<use href="#bk" x="57" y="655"/>
</svg>
<div class="t" style="left:43.5px;top:2px;transform:scaleX(0.99);transform-origin:0 0;">NISSAN NAVARA D23 (</div>
<div class="t" style="left:43.5px;top:20px;transform:scaleX(0.94);transform-origin:0 0;">TABLE OF CONTENTS</div>
<div class="t" style="left:43.5px;top:38px;transform:scaleX(0.9);transform-origin:0 0;">FOREWORD</div>
<div class="t" style="left:43.5px;top:56px;transform:scaleX(0.935);transform-origin:0 0;">GENERAL INFORMATION</div>
<div class="t" style="left:62.5px;top:74px;transform:scaleX(0.985);transform-origin:0 0;">HOW TO USE THIS</div>
<div class="t" style="left:62.5px;top:92px;transform:scaleX(0.911);transform-origin:0 0;">PRECAUTION</div>
<div class="t" style="left:62.5px;top:110px;transform:scaleX(0.936);transform-origin:0 0;">VEHICLE INFORMATION</div>
<div class="a" style="left:62.5px;top:122px;width:110px;height:1px;background:#000"></div>
<div class="t" style="left:62.5px;top:128px;transform:scaleX(0.926);transform-origin:0 0;">BASIC INSPECTION</div>
<div class="t" style="left:43.5px;top:146px;transform:scaleX(0.917);transform-origin:0 0;">ENGINE MECHANICAL</div>
<div class="t" style="left:62.5px;top:164px;transform:scaleX(0.92);transform-origin:0 0;">QR25DE</div>
<div class="t" style="left:62.5px;top:182px;transform:scaleX(0.97);transform-origin:0 0;">YS23DDT/YS23DDT</div>
<div class="t" style="left:62.5px;top:200px;transform:scaleX(0.968);transform-origin:0 0;">YD25DDTi</div>
<div class="t" style="left:43.5px;top:218px;transform:scaleX(0.938);transform-origin:0 0;">LUBRICATION</div>
<div class="t" style="left:62.5px;top:236px;transform:scaleX(0.92);transform-origin:0 0;">QR25DE</div>
<div class="t" style="left:62.5px;top:254px;transform:scaleX(0.97);transform-origin:0 0;">YS23DDT/YS23DDT</div>
<div class="t" style="left:62.5px;top:272px;transform:scaleX(0.968);transform-origin:0 0;">YD25DDTi</div>
<div class="t" style="left:43.5px;top:290px;transform:scaleX(0.908);transform-origin:0 0;">COOLING</div>
<div class="t" style="left:62.5px;top:308px;transform:scaleX(0.92);transform-origin:0 0;">QR25DE</div>
<div class="t" style="left:62.5px;top:326px;transform:scaleX(0.97);transform-origin:0 0;">YS23DDT/YS23DDT</div>
<div class="t" style="left:62.5px;top:344px;transform:scaleX(0.968);transform-origin:0 0;">YD25DDTi</div>
<div class="t" style="left:43.5px;top:362px;transform:scaleX(0.9);transform-origin:0 0;">ENGINE CONTROL SYSTEM</div>
<div class="t" style="left:62.5px;top:380px;transform:scaleX(0.92);transform-origin:0 0;">QR25DE</div>
<div class="t" style="left:62.5px;top:398px;transform:scaleX(0.968);transform-origin:0 0;">YD25DDTi</div>
<div class="t" style="left:62.5px;top:416px;transform:scaleX(0.97);transform-origin:0 0;">YS23DDT/YS23DDT</div>
<div class="t" style="left:62.5px;top:434px;transform:scaleX(0.94);transform-origin:0 0;">POWER SUPPLY ROUTING CIRCUIT</div>
<div class="t" style="left:62.5px;top:452px;transform:scaleX(0.91);transform-origin:0 0;">FUSE BLOCK - JUNCTION BOX</div>
<div class="t" style="left:62.5px;top:470px;transform:scaleX(0.914);transform-origin:0 0;">FUSE, FUSIBLE LINK AND RELAY BOX</div>
<div class="t" style="left:43.5px;top:488px;transform:scaleX(0.911);transform-origin:0 0;">FUEL SYSTEM</div>
</div>
<!-- doc area -->
<div class="a" style="left:228px;top:118px;width:1px;height:575px;background:#696969"></div>
<div class="a" style="left:229px;top:118px;width:878px;height:575px;background:#ababab"></div>
<div class="a" style="left:260px;top:118px;width:820px;height:575px;background:#000"></div>
<div class="a" style="left:261px;top:118px;width:815px;height:575px;background:#fff"></div>
<div class="a" style="left:1107px;top:118px;width:19px;height:575px;background:#f0f0f0"></div>
<div class="a" style="left:228px;top:118px;width:879px;height:1px;background:#6e6e6e"></div>


<!-- page content -->
<div class="a" style="left:261px;top:118px;width:815px;height:575px;overflow:hidden">
<svg style="left:-261px;top:-118px" width="1127" height="723" viewBox="0 0 1127 723">
<rect x="275" y="127" width="790" height="29" fill="#ffff00"/>
<text x="536.5" y="151.6" font-family="Liberation Sans" font-weight="bold" font-size="17.9">SECURITY CONTROL SYSTEM</text>
<text x="329.6" y="172.4" font-family="Liberation Sans" font-size="14.5">&lt; WIRING DIAGRAM &gt;</text>
<text x="758" y="169.4" font-family="Liberation Sans" font-weight="bold" font-size="14.6">[WITH INTELLIGENT KEY SYSTEM]</text>
<rect x="329" y="177" width="678" height="2" fill="#000"/>

<!-- IPDM -->
<rect x="437" y="406.3" width="130.1" height="114.5" fill="#e2e2f8"/>
<path d="M436,512.6 V406.3 H569.1 V512.3 C558,506 548,502.3 536.5,502.3 C513,502.3 490,521.9 467.3,521.9 C455,521.9 445,518 436,512.6" fill="none" stroke="#333" stroke-width="1"/>
<path d="M535.5,490.6 V425.6 H550.6 V490 C547,487.5 544,488 541,490.5 C539,492 537,491.8 535.5,490.6" fill="#e2e2f8" stroke="#222" stroke-width="1"/>
<path d="M550.6,432.2 H569.1" stroke="#1a1a40" stroke-width="1.6"/>
<path d="M550.6,482 H569.1" stroke="#1a1a40" stroke-width="1.7"/>

<g fill="none" stroke="#454545" stroke-width="2">
<path d="M419,700 V277 H467.3"/>
<path d="M487.6,277 H604.5"/>
<path d="M634.7,277 H674 V482 H569.1"/>
</g>
<g fill="none" stroke="#000" stroke-width="2">
<path d="M634.7,263 H834.3"/>
<path d="M742,263 V382 H757"/>
<path d="M804,263 V382 H777"/>
</g>
<g fill="none" stroke="#000" stroke-width="1.6">
<path d="M569.1,432.2 H602.3"/>
<path d="M550.6,456.1 H586 V432.2"/>
<path d="M429.3,700 V675.8 H451"/>
<path d="M495.3,675.8 H709.6"/>
<path d="M802.7,675.8 H861.4"/>
<path d="M834.4,675.8 V700"/>
</g>
<g fill="#000">
<circle cx="742" cy="263" r="3.6"/>
<circle cx="804" cy="263" r="3.6"/>
<circle cx="586" cy="432.2" r="3.4"/>
<circle cx="834.4" cy="675.8" r="3.6"/>
</g>

<!-- fuse 10A -->
<g fill="#fff" stroke="#222" stroke-width="1">
<rect x="467.3" y="270.3" width="20.3" height="13.2"/>
<line x1="467.3" y1="270.3" x2="487.6" y2="283.5"/>
<rect x="477.3" y="252.6" width="8.5" height="14.3" rx="1.5"/>
</g>
<g font-family="Liberation Sans" font-size="7.15" fill="#111" stroke="#111" stroke-width="0.12">
<text transform="translate(476,265) rotate(-90)">10A</text>
<text transform="translate(484.3,265.5) rotate(-90)" font-size="8">44</text>
</g>

<!-- relay -->
<rect x="604.3" y="254.6" width="30.3" height="28.9" fill="#fde2e2" stroke="#6a5050" stroke-width="1"/>
<line x1="604.6" y1="256" x2="604.6" y2="283.5" stroke="#000" stroke-width="1.4"/>
<path d="M604.6,276.9 H618 M611,276.9 V263.3 H618" fill="none" stroke="#5a4040" stroke-width="1"/>
<circle cx="611" cy="276.9" r="2.1" fill="#000"/>
<circle cx="619.5" cy="263.3" r="1.7" fill="#fff" stroke="#333" stroke-width="0.8"/>
<circle cx="629.7" cy="263.3" r="1.7" fill="#fff" stroke="#333" stroke-width="0.8"/>
<path d="M618.3,261 V258.8 H631.5 V261" fill="none" stroke="#8a7a7a" stroke-width="1.4"/>
<path d="M618,276.9 C619,273 621.5,273 622,276.9 C622.5,281 619,281 620.5,276.9 C621.5,273 625.5,273 626,276.9 C626.5,281 623,281 624.5,276.9 C625.5,273 629,273 630,276.9 L634.6,276.9" fill="none" stroke="#333" stroke-width="0.9"/>

<!-- horns -->
<g fill="#fff" stroke="#222" stroke-width="1">
<rect x="756.8" y="256.5" width="20.6" height="14.1"/>
<path d="M759.4,249.6 H773.9 L770.5,257 H762.8 Z"/>
<circle cx="767" cy="263.4" r="8.5"/>
<rect x="756.2" y="375.3" width="21.2" height="13.2"/>
<path d="M760,368.4 H773.5 L770.5,375.5 H763 Z"/>
<circle cx="767" cy="382.3" r="8.3"/>
</g>

<!-- ground boxes -->
<g fill="#fff" stroke="#444" stroke-width="0.9">
<rect x="827.5" y="256.4" width="11.9" height="14" rx="1"/>
<rect x="602.3" y="425.4" width="12" height="13.9" rx="1"/>
<rect x="861.4" y="669" width="12.1" height="13" rx="1"/>
</g>
<g stroke="#333" stroke-width="1">
<path d="M827.5,263.2 H834.3 M834.3,258 V268.5 M836.4,260 V266.5 M838.3,262 V264.5"/>
<path d="M602.3,432.2 H609 M609,427.2 V437.2 M611,429 V435.4 M613,431 V433.4"/>
<path d="M861.4,676 H868 M868,671 V681 M870,673 V679 M872,675 V677"/>
</g>
<path d="M827.5,263.2 H834.3" stroke="#000" stroke-width="1.6"/>
<path d="M602.3,432.2 H609" stroke="#000" stroke-width="1.6"/>
<path d="M861.4,676 H868" stroke="#000" stroke-width="1.6"/>

<!-- fuse block -->
<path d="M451,700 V645.2 H495.3 V700" fill="none" stroke="#222" stroke-width="1"/>
<path d="M451,676 H463.2 M483.6,676 H495.3" stroke="#333" stroke-width="0.9"/>
<g fill="#fff" stroke="#222" stroke-width="1">
<rect x="463.2" y="669.4" width="20.4" height="13.3"/>
<line x1="463.2" y1="669.4" x2="483.6" y2="682.7"/>
<rect x="475" y="651.7" width="7.7" height="14.3" rx="1.5"/>
</g>

<!-- combination meter -->
<path d="M709.6,700 V660.2 H802.7 V700" fill="none" stroke="#222" stroke-width="1"/>
<path d="M709.6,676 H766.4 M716,676 V690" fill="none" stroke="#333" stroke-width="0.9"/>
<circle cx="716" cy="676" r="1.6" fill="#000"/>
<path d="M712.5,686.5 H719.5 L716,692 Z" fill="#000"/>
<path d="M726.3,672 V680 L732,676 Z" fill="#000"/>
<line x1="732.2" y1="672" x2="732.2" y2="680" stroke="#000" stroke-width="1"/>
<rect x="766.4" y="667" width="23.3" height="40" fill="#fff" stroke="#222" stroke-width="1"/>
<path d="M795.3,700 V675.5 H802.7" fill="none" stroke="#333" stroke-width="0.9"/>

<!-- ellipses -->
<g fill="#fff" stroke="#1a1a1a" stroke-width="1">
<rect x="619.50" y="232.00" width="10.00" height="21.00" rx="5.00" ry="5.00"/>
<rect x="766.80" y="226.50" width="10.40" height="21.00" rx="5.20" ry="5.20"/>
<rect x="766.80" y="201.60" width="10.40" height="21.00" rx="5.20" ry="5.20"/>
<rect x="766.40" y="346.20" width="10.80" height="20.80" rx="5.40" ry="5.40"/>
<rect x="766.40" y="320.60" width="10.80" height="20.80" rx="5.40" ry="5.40"/>
<rect x="841.40" y="252.50" width="10.20" height="21.00" rx="5.10" ry="5.10"/>
<rect x="506.50" y="384.50" width="10.60" height="21.20" rx="5.30" ry="5.30"/>
<rect x="506.50" y="358.70" width="10.60" height="21.20" rx="5.30" ry="5.30"/>
<rect x="506.50" y="333.40" width="10.60" height="21.20" rx="5.30" ry="5.30"/>
<rect x="506.50" y="307.70" width="10.60" height="21.20" rx="5.30" ry="5.30"/>
<rect x="518.50" y="384.50" width="10.60" height="21.20" rx="5.30" ry="5.30"/>
<rect x="518.50" y="358.70" width="10.60" height="21.20" rx="5.30" ry="5.30"/>
<rect x="518.50" y="333.40" width="10.60" height="21.20" rx="5.30" ry="5.30"/>
<rect x="616.70" y="421.80" width="9.60" height="21.20" rx="4.80" ry="4.80"/>
<rect x="475.50" y="622.50" width="11.00" height="21.00" rx="5.50" ry="5.50"/>
<rect x="475.50" y="597.50" width="11.00" height="21.00" rx="5.50" ry="5.50"/>
<rect x="475.50" y="571.00" width="11.00" height="21.00" rx="5.50" ry="5.50"/>
<rect x="475.50" y="544.50" width="11.00" height="21.00" rx="5.50" ry="5.50"/>
<rect x="758.00" y="637.20" width="10.40" height="20.60" rx="5.20" ry="5.20"/>
<rect x="758.00" y="610.20" width="10.40" height="20.60" rx="5.20" ry="5.20"/>
<rect x="874.50" y="665.30" width="11.00" height="21.40" rx="5.50" ry="5.50"/>
</g>

<g font-family="Liberation Sans" font-size="7.15" fill="#111" stroke="#111" stroke-width="0.12">
<text transform="translate(618,253) rotate(-90)">HORN RELAY</text>
<text transform="translate(765.4,247.6) rotate(-90)">HORN HIGH</text>
<text transform="translate(765,366.4) rotate(-90)">HORN LOW</text>
<text transform="translate(482.6,405.4) rotate(-90)">IPDM E/R</text>
<text transform="translate(489.6,405.4) rotate(-90)">(INTELLIGENT POWER</text>
<text transform="translate(496.9,405.4) rotate(-90)">DISTRIBUTION MODULE</text>
<text transform="translate(504.3,405.4) rotate(-90)">ENGINE ROOM)</text>
<text transform="translate(467.6,643.5) rotate(-90)">FUSE BLOCK</text>
<text transform="translate(473.8,643.5) rotate(-90)">(J/B)</text>
<text transform="translate(751,659) rotate(-90)">COMBINATION</text>
<text transform="translate(757,659) rotate(-90)">METER</text>
<text transform="translate(547.7,464.5) rotate(-90)">CPU</text>
<text transform="translate(782,688.5) rotate(-90)">UNIT</text>
<text transform="translate(473.5,666) rotate(-90)">5A</text>
<text transform="translate(503,673) rotate(-90)">8C</text>
<text transform="translate(577,442) rotate(-90)">62</text>
<text transform="translate(577,466) rotate(-90)">52</text>
<text transform="translate(577,492) rotate(-90)">48</text>
<text transform="translate(709,685) rotate(-90)">46</text>
<text transform="translate(810,685) rotate(-90)">52</text>
<text transform="translate(642,270) rotate(-90)">3</text>
<text transform="translate(642,284) rotate(-90)">1</text>
<text transform="translate(602,284) rotate(-90)">2</text>
<text transform="translate(756,270) rotate(-90)">1</text>
<text transform="translate(784.6,270) rotate(-90)">2</text>
<text transform="translate(756,391) rotate(-90)">1</text>
<text transform="translate(786,391) rotate(-90)">2</text>
</g>
<g font-family="Liberation Sans" font-size="7.5" fill="#111" stroke="#111" stroke-width="0.12" text-anchor="middle">
<text transform="translate(627.3,242.5) rotate(-90)">E27</text>
<text transform="translate(774.8,237) rotate(-90)">E41</text>
<text transform="translate(774.8,212.1) rotate(-90)">E42</text>
<text transform="translate(774.6,356.6) rotate(-90)">E43</text>
<text transform="translate(774.6,331) rotate(-90)">E44</text>
<text transform="translate(849.3,263) rotate(-90)">E14</text>
<text transform="translate(514.6,395.1) rotate(-90)">E60</text>
<text transform="translate(514.6,369.3) rotate(-90)">E61</text>
<text transform="translate(514.6,344) rotate(-90)">E62</text>
<text transform="translate(514.6,318.3) rotate(-90)">E63</text>
<text transform="translate(526.6,395.1) rotate(-90)">E64</text>
<text transform="translate(526.6,369.3) rotate(-90)">E65</text>
<text transform="translate(526.6,344) rotate(-90)">E66</text>
<text transform="translate(624.3,432.4) rotate(-90)">E14</text>
<text transform="translate(483.8,633) rotate(-90)">M35</text>
<text transform="translate(483.8,608) rotate(-90)">M36</text>
<text transform="translate(483.8,581.5) rotate(-90)">E36</text>
<text transform="translate(483.8,555) rotate(-90)">E38</text>
<text transform="translate(766,647.5) rotate(-90)">M49</text>
<text transform="translate(766,620.5) rotate(-90)">M50</text>
<text transform="translate(882.8,676) rotate(-90)">M17</text>
<text transform="translate(481.8,659.8) rotate(-90)">31</text>
</g>
</svg>
</div>

<!-- status bar -->
<div class="a" style="left:228px;top:693px;width:898px;height:1px;background:#fff"></div>
<div class="a" style="left:1px;top:694px;width:1125px;height:1px;background:#fff"></div>
<div class="a" style="left:1px;top:695px;width:1125px;height:1px;background:#d8d8d8"></div>
<div class="t" style="left:3.5px;top:703px;font-size:12px;letter-spacing:-0.45px">Ready</div>
<div class="a" style="left:1107px;top:118px;width:1px;height:575px;background:#fafafa"></div>
<div class="a" style="left:1108px;top:418px;width:15px;height:17px;background:#cdcdcd"></div>
<svg style="left:1110px;top:124px" width="10" height="7" viewBox="0 0 10 7"><path d="M1,5.5 L5,1.5 L9,5.5" fill="none" stroke="#606060" stroke-width="1.8"/></svg>
<svg style="left:1110px;top:681px" width="10" height="7" viewBox="0 0 10 7"><path d="M1,1.5 L5,5.5 L9,1.5" fill="none" stroke="#606060" stroke-width="1.8"/></svg>
<div class="a" style="left:300px;top:696px;width:600px;height:1px;background:#a0a0a0"></div>
<svg style="left:304px;top:702px" width="14" height="14" viewBox="0 0 14 14">
<circle cx="7" cy="7" r="6.4" fill="#d8e4fc" stroke="#88a4e4" stroke-width="1"/><circle cx="7" cy="7" r="5.2" fill="none" stroke="#f4f8ff" stroke-width="0.9"/><path d="M4.8,4.4 H9.2" stroke="#4a6cc8" stroke-width="1.4"/><path d="M7,6.3 L4.5,10 H9.5 Z" fill="#4a6cc8"/></svg>
<svg style="left:327px;top:702px" width="14" height="14" viewBox="0 0 14 14">
<circle cx="7" cy="7" r="6.4" fill="#d8e4fc" stroke="#88a4e4" stroke-width="1"/><circle cx="7" cy="7" r="5.2" fill="none" stroke="#f4f8ff" stroke-width="0.9"/><path d="M4.5,9.2 H9.5 L7,5 Z" fill="#4a6cc8"/></svg>
<div class="a" style="left:348px;top:702px;width:105px;height:18px;background:#fff"></div>
<div class="t" style="left:352px;top:702.6px;font-size:13px;line-height:16px;letter-spacing:0.1px">5159 / 9568</div>
<svg style="left:442px;top:708px" width="10" height="6" viewBox="0 0 10 6"><path d="M1,1 L5,5 L9,1" fill="none" stroke="#404040" stroke-width="1.1"/></svg>
<svg style="left:460px;top:702px" width="14" height="14" viewBox="0 0 14 14">
<circle cx="7" cy="7" r="6.4" fill="#d8e4fc" stroke="#88a4e4" stroke-width="1"/><circle cx="7" cy="7" r="5.2" fill="none" stroke="#f4f8ff" stroke-width="0.9"/><path d="M4.5,4.8 H9.5 L7,9 Z" fill="#4a6cc8"/></svg>
<svg style="left:483px;top:702px" width="14" height="14" viewBox="0 0 14 14">
<circle cx="7" cy="7" r="6.4" fill="#d8e4fc" stroke="#88a4e4" stroke-width="1"/><circle cx="7" cy="7" r="5.2" fill="none" stroke="#f4f8ff" stroke-width="0.9"/><path d="M4.8,9.6 H9.2" stroke="#4a6cc8" stroke-width="1.4"/><path d="M7,7.7 L4.5,4 H9.5 Z" fill="#4a6cc8"/></svg>
<div class="a" style="left:505px;top:700px;width:1px;height:18px;background:#a0a0a0"></div>
<svg style="left:512px;top:703px" width="14" height="12" viewBox="0 0 14 12">
<path d="M0.6,6 L5.6,0.8 V3.5 H12.8 Q13.4,3.5 13.4,4.1 V7.9 Q13.4,8.5 12.8,8.5 H5.6 V11.2 Z" fill="#f8d060" stroke="#d8a020" stroke-width="1"/></svg>
<svg style="left:536px;top:703px" width="14" height="12" viewBox="0 0 14 12">
<path d="M13.4,6 L8.4,0.8 V3.5 H1.2 Q0.6,3.5 0.6,4.1 V7.9 Q0.6,8.5 1.2,8.5 H8.4 V11.2 Z" fill="#e4e4e4" stroke="#c4c4c4" stroke-width="1"/></svg>
<div class="a" style="left:557px;top:700px;width:1px;height:18px;background:#a0a0a0"></div>
<div class="a" style="left:562px;top:702px;width:95px;height:18px;background:#fff"></div>
<div class="t" style="left:566.5px;top:702px;font-size:13px;line-height:16px">100%</div>
<svg style="left:646px;top:708px" width="10" height="6" viewBox="0 0 10 6"><path d="M1,1 L5,5 L9,1" fill="none" stroke="#404040" stroke-width="1.1"/></svg>
<div class="a" style="left:707px;top:699px;width:20px;height:20px;background:#c8b8e8;border:1px solid #b8a8dc;border-radius:2px"></div>
<svg style="left:687px;top:702px" width="14" height="16" viewBox="0 0 14 16">
<rect x="0.5" y="0.5" width="13" height="15" fill="#f4f6fe" stroke="#6a88d0" stroke-width="1"/>
<path d="M3,3.5 H11 M3,5.5 H11 M3,7.5 H11 M3,9.5 H11 M3,11.5 H11 M3,13.5 H11" stroke="#98aee0" stroke-width="0.9"/></svg>
<svg style="left:710px;top:701px" width="14" height="17" viewBox="0 0 14 17">
<rect x="0.5" y="0.5" width="13" height="7" fill="#f4f6fe" stroke="#5a7ad0" stroke-width="1"/>
<rect x="0.5" y="9.5" width="13" height="7" fill="#f4f6fe" stroke="#5a7ad0" stroke-width="1"/>
<path d="M3,3 H11 M3,5 H11 M3,12 H11 M3,14 H11" stroke="#98aee0" stroke-width="0.9"/></svg>
<svg style="left:732px;top:702px" width="17" height="16" viewBox="0 0 17 16">
<rect x="0.5" y="0.5" width="7" height="6.5" fill="#f4f6fe" stroke="#6a88d0" stroke-width="1"/>
<rect x="9.5" y="0.5" width="7" height="6.5" fill="#f4f6fe" stroke="#6a88d0" stroke-width="1"/>
<rect x="0.5" y="9" width="7" height="6.5" fill="#f4f6fe" stroke="#6a88d0" stroke-width="1"/>
<rect x="9.5" y="9" width="7" height="6.5" fill="#f4f6fe" stroke="#6a88d0" stroke-width="1"/></svg>
<svg style="left:756px;top:702px" width="15" height="16" viewBox="0 0 15 16">
<rect x="0.5" y="0.5" width="6" height="15" fill="#f4f6fe" stroke="#6a88d0" stroke-width="1"/>
<rect x="8.5" y="0.5" width="6" height="15" fill="#f4f6fe" stroke="#6a88d0" stroke-width="1"/>
<path d="M2.5,3 V13 M10.5,3 V13" stroke="#98aee0" stroke-width="0.9"/></svg>
<div class="t" style="left:902.5px;top:702.2px;font-size:13px;line-height:16px;letter-spacing:0px">Size: [8.50 * 11.00 in]</div>
<div class="a" style="left:1106px;top:696px;width:1px;height:25px;background:#d8d8d8"></div>
<svg style="left:1114px;top:711px" width="10" height="10" viewBox="0 0 10 10">
<g fill="#b8b8b8"><rect x="7" y="0" width="2" height="2"/><rect x="4" y="3" width="2" height="2"/><rect x="7" y="3" width="2" height="2"/>
<rect x="1" y="6" width="2" height="2"/><rect x="4" y="6" width="2" height="2"/><rect x="7" y="6" width="2" height="2"/></g></svg>

</body></html>
